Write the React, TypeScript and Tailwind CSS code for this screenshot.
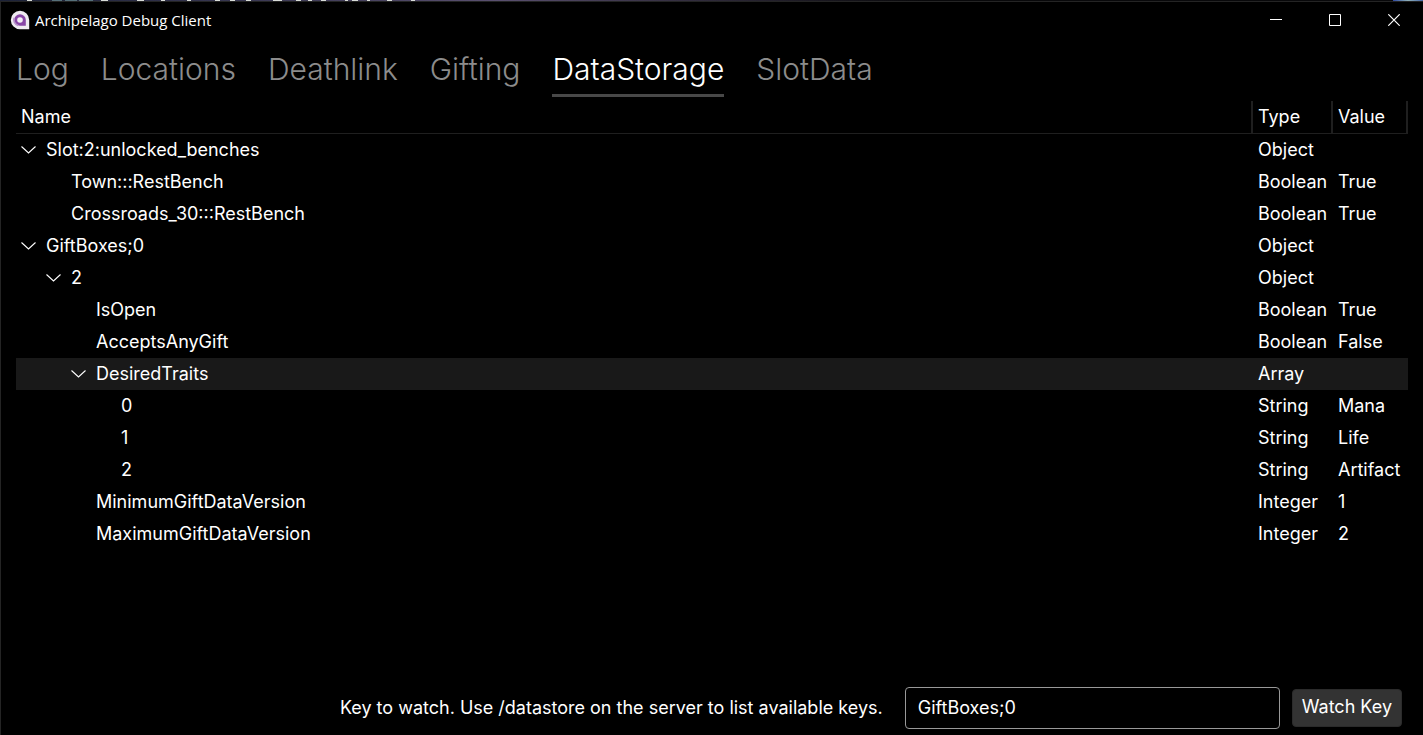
import { useState } from "react";

type Row = {
  name: string;
  level: number;
  type: string;
  value?: string;
  expandable?: boolean;
  selected?: boolean;
};

const rows: Row[] = [
  { name: "Slot:2:unlocked_benches", level: 0, type: "Object", expandable: true },
  { name: "Town:::RestBench", level: 1, type: "Boolean", value: "True" },
  { name: "Crossroads_30:::RestBench", level: 1, type: "Boolean", value: "True" },
  { name: "GiftBoxes;0", level: 0, type: "Object", expandable: true },
  { name: "2", level: 1, type: "Object", expandable: true },
  { name: "IsOpen", level: 2, type: "Boolean", value: "True" },
  { name: "AcceptsAnyGift", level: 2, type: "Boolean", value: "False" },
  { name: "DesiredTraits", level: 2, type: "Array", expandable: true, selected: true },
  { name: "0", level: 3, type: "String", value: "Mana" },
  { name: "1", level: 3, type: "String", value: "Life" },
  { name: "2", level: 3, type: "String", value: "Artifact" },
  { name: "MinimumGiftDataVersion", level: 2, type: "Integer", value: "1" },
  { name: "MaximumGiftDataVersion", level: 2, type: "Integer", value: "2" },
];

const indents = ["pl-[5px]", "pl-[30px]", "pl-[55px]", "pl-[80px]"];
const tabs = ["Log", "Locations", "Deathlink", "Gifting", "DataStorage", "SlotData"];

function BackdropEdge() {
  return (
    <div className="flex h-px justify-between bg-linear-to-r from-[#1c2238] via-[#5a5070] via-35% to-[#08080a] to-65%">
      <svg className="h-px w-[420px]" viewBox="0 0 420 1" aria-hidden="true">
        <path
          d="M27 .5h5M101 .5h7M137 .5h7M161 .5h4M187 .5h4M215 .5h5M230 .5h5M246 .5h5M273 .5h9M296 .5h5M308 .5h4M321 .5h5M345 .5h3M352 .5h6M367 .5h3M387 .5h5M411 .5h4"
          stroke="#d8dcd8"
        />
        <path d="M52 .5h10M65 .5h12M79 .5h14" stroke="#56707a" />
      </svg>
      <div className="w-[30px] bg-linear-to-r from-[#3248a0] via-[#8fb0b8] to-[#4a68a8]" />
    </div>
  );
}

function AppIcon() {
  return (
    <svg className="h-5 w-5" viewBox="0 0 20 20" aria-hidden="true">
      <path d="M10 .8a9.2 9.2 0 1 0 0 18.4h9.2V10A9.2 9.2 0 0 0 10 .8Z" fill="#efebf1" />
      <path d="M10 4.2a5.8 5.8 0 1 0 0 11.6h5.8V10A5.8 5.8 0 0 0 10 4.2Z" fill="#8846a6" />
      <path d="M3.4 7.5 5 8.4a5 5 0 0 0 3.4 6.4l-.6 1.4a6.6 6.6 0 0 1-4.4-8.7Z" fill="#b893cb" />
      <circle cx="10" cy="10" r="2.8" fill="#f4f1f6" />
    </svg>
  );
}

function TitleBar() {
  const button = "flex h-8 w-[59px] items-center justify-center";
  return (
    <header className="flex h-9 items-center pl-[9px]">
      <AppIcon />
      <h1 className="ml-[5px] flex-1 font-['Open_Sans','Noto_Sans',sans-serif] text-[15px]">
        Archipelago Debug Client
      </h1>
      <button type="button" aria-label="Minimize" className={button}>
        <svg className="h-3 w-3" viewBox="0 0 12 12" stroke="#fff" fill="none">
          <path d="M0 5.5h12" />
        </svg>
      </button>
      <button type="button" aria-label="Maximize" className={button}>
        <svg className="h-3 w-3" viewBox="0 0 12 12" stroke="#fff" fill="none">
          <path d="M.5.5h11v11H.5z" />
        </svg>
      </button>
      <button type="button" aria-label="Close" className={button}>
        <svg className="h-3 w-3" viewBox="0 0 12 12" stroke="#fff" strokeWidth="1.2" fill="none">
          <path d="m.3.3 11.4 11.4M11.7.3.3 11.7" />
        </svg>
      </button>
    </header>
  );
}

function Chevron() {
  return (
    <svg className="h-4 w-4" viewBox="0 0 16 16" stroke="#fff" strokeWidth="1.1" fill="none">
      <path d="m.5 4.5 7 6.5 7-6.5" />
    </svg>
  );
}

function DataTable() {
  const head = "border-b border-b-[#1f1f1f] p-0 text-left font-normal";
  return (
    <table className="w-full table-fixed border-separate border-spacing-0">
      <colgroup>
        <col />
        <col className="w-20" />
        <col className="w-[75px]" />
      </colgroup>
      <thead>
        <tr className="h-[33px]">
          <th scope="col" className={`${head} border-r-2 border-r-[#1f1f1f] pl-[5px]`}>Name</th>
          <th scope="col" className={`${head} border-r-2 border-r-[#1f1f1f] pl-[5px]`}>Type</th>
          <th scope="col" className={`${head} border-r-2 border-r-[#1f1f1f] pl-[5px]`}>Value</th>
        </tr>
      </thead>
      <tbody>
        {rows.map((row, i) => (
          <tr key={i} className={row.selected ? "h-8 bg-[#191919]" : "h-8"}>
            <td className={`p-0 ${indents[row.level]}`}>
              <div className="flex items-center">
                {row.expandable ? (
                  <button type="button" aria-label={`Collapse ${row.name}`} className="w-[25px]">
                    <Chevron />
                  </button>
                ) : (
                  <span className="w-[25px]" />
                )}
                <span>{row.name}</span>
              </div>
            </td>
            <td className="p-0 pl-[5px]">{row.type}</td>
            <td className="p-0 pl-[5px]">{row.value}</td>
          </tr>
        ))}
      </tbody>
    </table>
  );
}

export default function App() {
  const [key, setKey] = useState("GiftBoxes;0");
  return (
    <div className="flex min-h-screen flex-col bg-black font-['Inter',sans-serif] text-lg leading-6 text-white">
      <BackdropEdge />
      <div className="flex flex-1 flex-col border-t border-l border-[#242424]">
        <TitleBar />
        <nav className="flex gap-8 px-[15px] pt-[10px]">
          {tabs.map((tab) => (
            <a
              key={tab}
              href={`#${tab}`}
              className={
                tab === "DataStorage"
                  ? "border-b-3 border-[#484848] pb-1 text-[30px] leading-[42px] font-light"
                  : "border-b-3 border-transparent pb-1 text-[30px] leading-[42px] font-light text-[#8c8c8c]"
              }
            >
              {tab}
            </a>
          ))}
        </nav>
        <main className="flex flex-1 flex-col pt-1 pr-[15px] pb-[6px] pl-[15px]">
          <DataTable />
          <form
            className="mt-auto flex items-center justify-end pr-[6px]"
            onSubmit={(e) => e.preventDefault()}
          >
            <label htmlFor="watch-key">
              Key to watch. Use /datastore on the server to list available keys.
            </label>
            <input
              id="watch-key"
              type="text"
              value={key}
              onChange={(e) => setKey(e.target.value)}
              className="ml-[22px] h-[42px] w-[375px] rounded border border-[#999] bg-black px-3 pb-0.5"
            />
            <button
              type="submit"
              className="ml-3 h-[38px] rounded border border-[#2b2b2b] bg-[#333] px-[9px] pb-0.5"
            >
              Watch Key
            </button>
          </form>
        </main>
      </div>
    </div>
  );
}
